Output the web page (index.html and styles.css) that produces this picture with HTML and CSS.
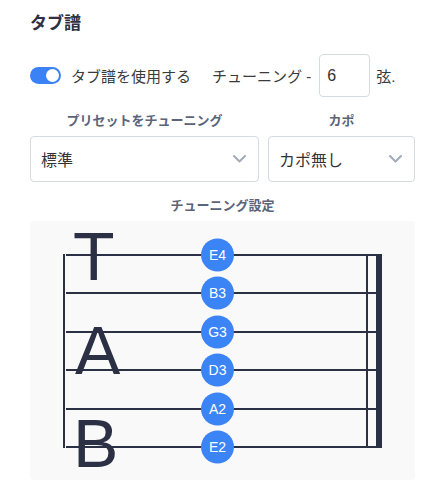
FILE: index.html
```html
<!DOCTYPE html>
<html lang="ja">
<head>
<meta charset="utf-8">
<title>タブ譜</title>
<link rel="stylesheet" href="styles.css">
</head>
<body>
<main class="panel">
  <h2 class="title">タブ譜</h2>

  <div class="toggle-row">
    <span class="switch"><span class="knob"></span></span>
    <span class="switch-label">タブ譜を使用する</span>
    <span class="strings-label">チューニング -</span>
    <input class="strings-input" type="text" value="6">
    <span class="strings-unit">弦.</span>
  </div>

  <div class="selects">
    <div class="field">
      <div class="field-label">プリセットをチューニング</div>
      <div class="select">
        <span class="select-value">標準</span>
        <svg class="chevron" width="13" height="8" viewBox="0 0 13 8"><polyline points="1,1 6.5,6.5 12,1" fill="none" stroke="#a3abb8" stroke-width="2" stroke-linecap="round" stroke-linejoin="round"/></svg>
      </div>
    </div>
    <div class="field">
      <div class="field-label">カポ</div>
      <div class="select">
        <span class="select-value">カポ無し</span>
        <svg class="chevron" width="13" height="8" viewBox="0 0 13 8"><polyline points="1,1 6.5,6.5 12,1" fill="none" stroke="#a3abb8" stroke-width="2" stroke-linecap="round" stroke-linejoin="round"/></svg>
      </div>
    </div>
  </div>

  <div class="section-label">チューニング設定</div>

  <div class="tab-box">
    <svg class="staff" width="385" height="259" viewBox="0 0 385 259">
      <g fill="#2c3044">
        <rect x="33" y="33" width="2" height="194"/>
        <rect x="36" y="33" width="316" height="2"/>
        <rect x="36" y="71" width="316" height="2"/>
        <rect x="36" y="110" width="316" height="2"/>
        <rect x="36" y="148" width="316" height="2"/>
        <rect x="36" y="187" width="316" height="2"/>
        <rect x="36" y="225" width="316" height="2"/>
        <rect x="336" y="33" width="2" height="194"/>
        <rect x="346" y="33" width="6" height="194"/>
      </g>
      <g class="tab-letters" fill="#2c3044">
        <text x="43" y="59">T</text>
        <text x="45" y="153">A</text>
        <text x="43" y="246">B</text>
      </g>
      <g class="notes">
        <circle cx="187.5" cy="34" r="16.5"/><text x="187.5" y="34">E4</text>
        <circle cx="187.5" cy="72" r="16.5"/><text x="187.5" y="72">B3</text>
        <circle cx="187.5" cy="111" r="16.5"/><text x="187.5" y="111">G3</text>
        <circle cx="187.5" cy="149" r="16.5"/><text x="187.5" y="149">D3</text>
        <circle cx="187.5" cy="188" r="16.5"/><text x="187.5" y="188">A2</text>
        <circle cx="187.5" cy="226" r="16.5"/><text x="187.5" y="226">E2</text>
      </g>
    </svg>
  </div>
</main>
</body>
</html>
```

FILE: styles.css
```css
* { box-sizing: border-box; }

html, body {
  margin: 0;
  padding: 0;
  background: #ffffff;
}

body {
  font-family: "Liberation Sans", "Noto Sans CJK JP", sans-serif;
  color: #333333;
}

.panel {
  width: 446px;
  padding: 12px 31px 0 30px;
}

.title {
  margin: 0;
  font-size: 17px;
  line-height: 24px;
  font-weight: 700;
  color: #2d3142;
}

.toggle-row {
  display: flex;
  align-items: center;
  height: 43px;
  margin-top: 18px;
  font-size: 15px;
  color: #3a3a3a;
}

.switch {
  position: relative;
  display: inline-block;
  width: 31px;
  height: 17px;
  border-radius: 9px;
  background: #3b82f6;
  margin-right: 10px;
  flex: none;
}

.knob {
  position: absolute;
  top: 2px;
  right: 2px;
  width: 13px;
  height: 13px;
  border-radius: 50%;
  background: #ffffff;
}

.switch-label {
  margin-right: 21px;
}

.strings-label {
  margin-right: 8px;
}

.strings-input {
  width: 51px;
  height: 43px;
  margin: 0 6px 0 0;
  padding: 0 0 0 7px;
  border: 1px solid #d3dae1;
  border-radius: 4px;
  font-family: "Liberation Sans", "Noto Sans CJK JP", sans-serif;
  font-size: 16px;
  color: #333333;
  background: #ffffff;
  outline: none;
}

.selects {
  display: grid;
  grid-template-columns: 229px 1fr;
  column-gap: 9px;
  margin-top: 15px;
}

.field {
  display: flex;
  flex-direction: column;
}

.field-label,
.section-label {
  text-align: center;
  font-size: 13px;
  line-height: 18px;
  font-weight: 700;
  color: #5b6479;
}

.select {
  display: flex;
  align-items: center;
  justify-content: space-between;
  height: 46px;
  margin-top: 6px;
  padding: 0 12px 0 10px;
  border: 1px solid #d3dae1;
  border-radius: 4px;
  font-size: 16px;
  color: #333333;
  background: #ffffff;
}

.chevron {
  flex: none;
}

.section-label {
  margin-top: 15px;
}

.tab-box {
  height: 259px;
  margin-top: 6px;
  border-radius: 4px;
  background: #f9f9f9;
}

.staff {
  display: block;
}

.tab-letters text {
  font-family: "Liberation Sans", sans-serif;
  font-size: 68px;
}

.notes circle {
  fill: #3b84f6;
}

.notes text {
  fill: #ffffff;
  font-family: "Liberation Sans", sans-serif;
  font-size: 14px;
  text-anchor: middle;
  dominant-baseline: central;
}
```
